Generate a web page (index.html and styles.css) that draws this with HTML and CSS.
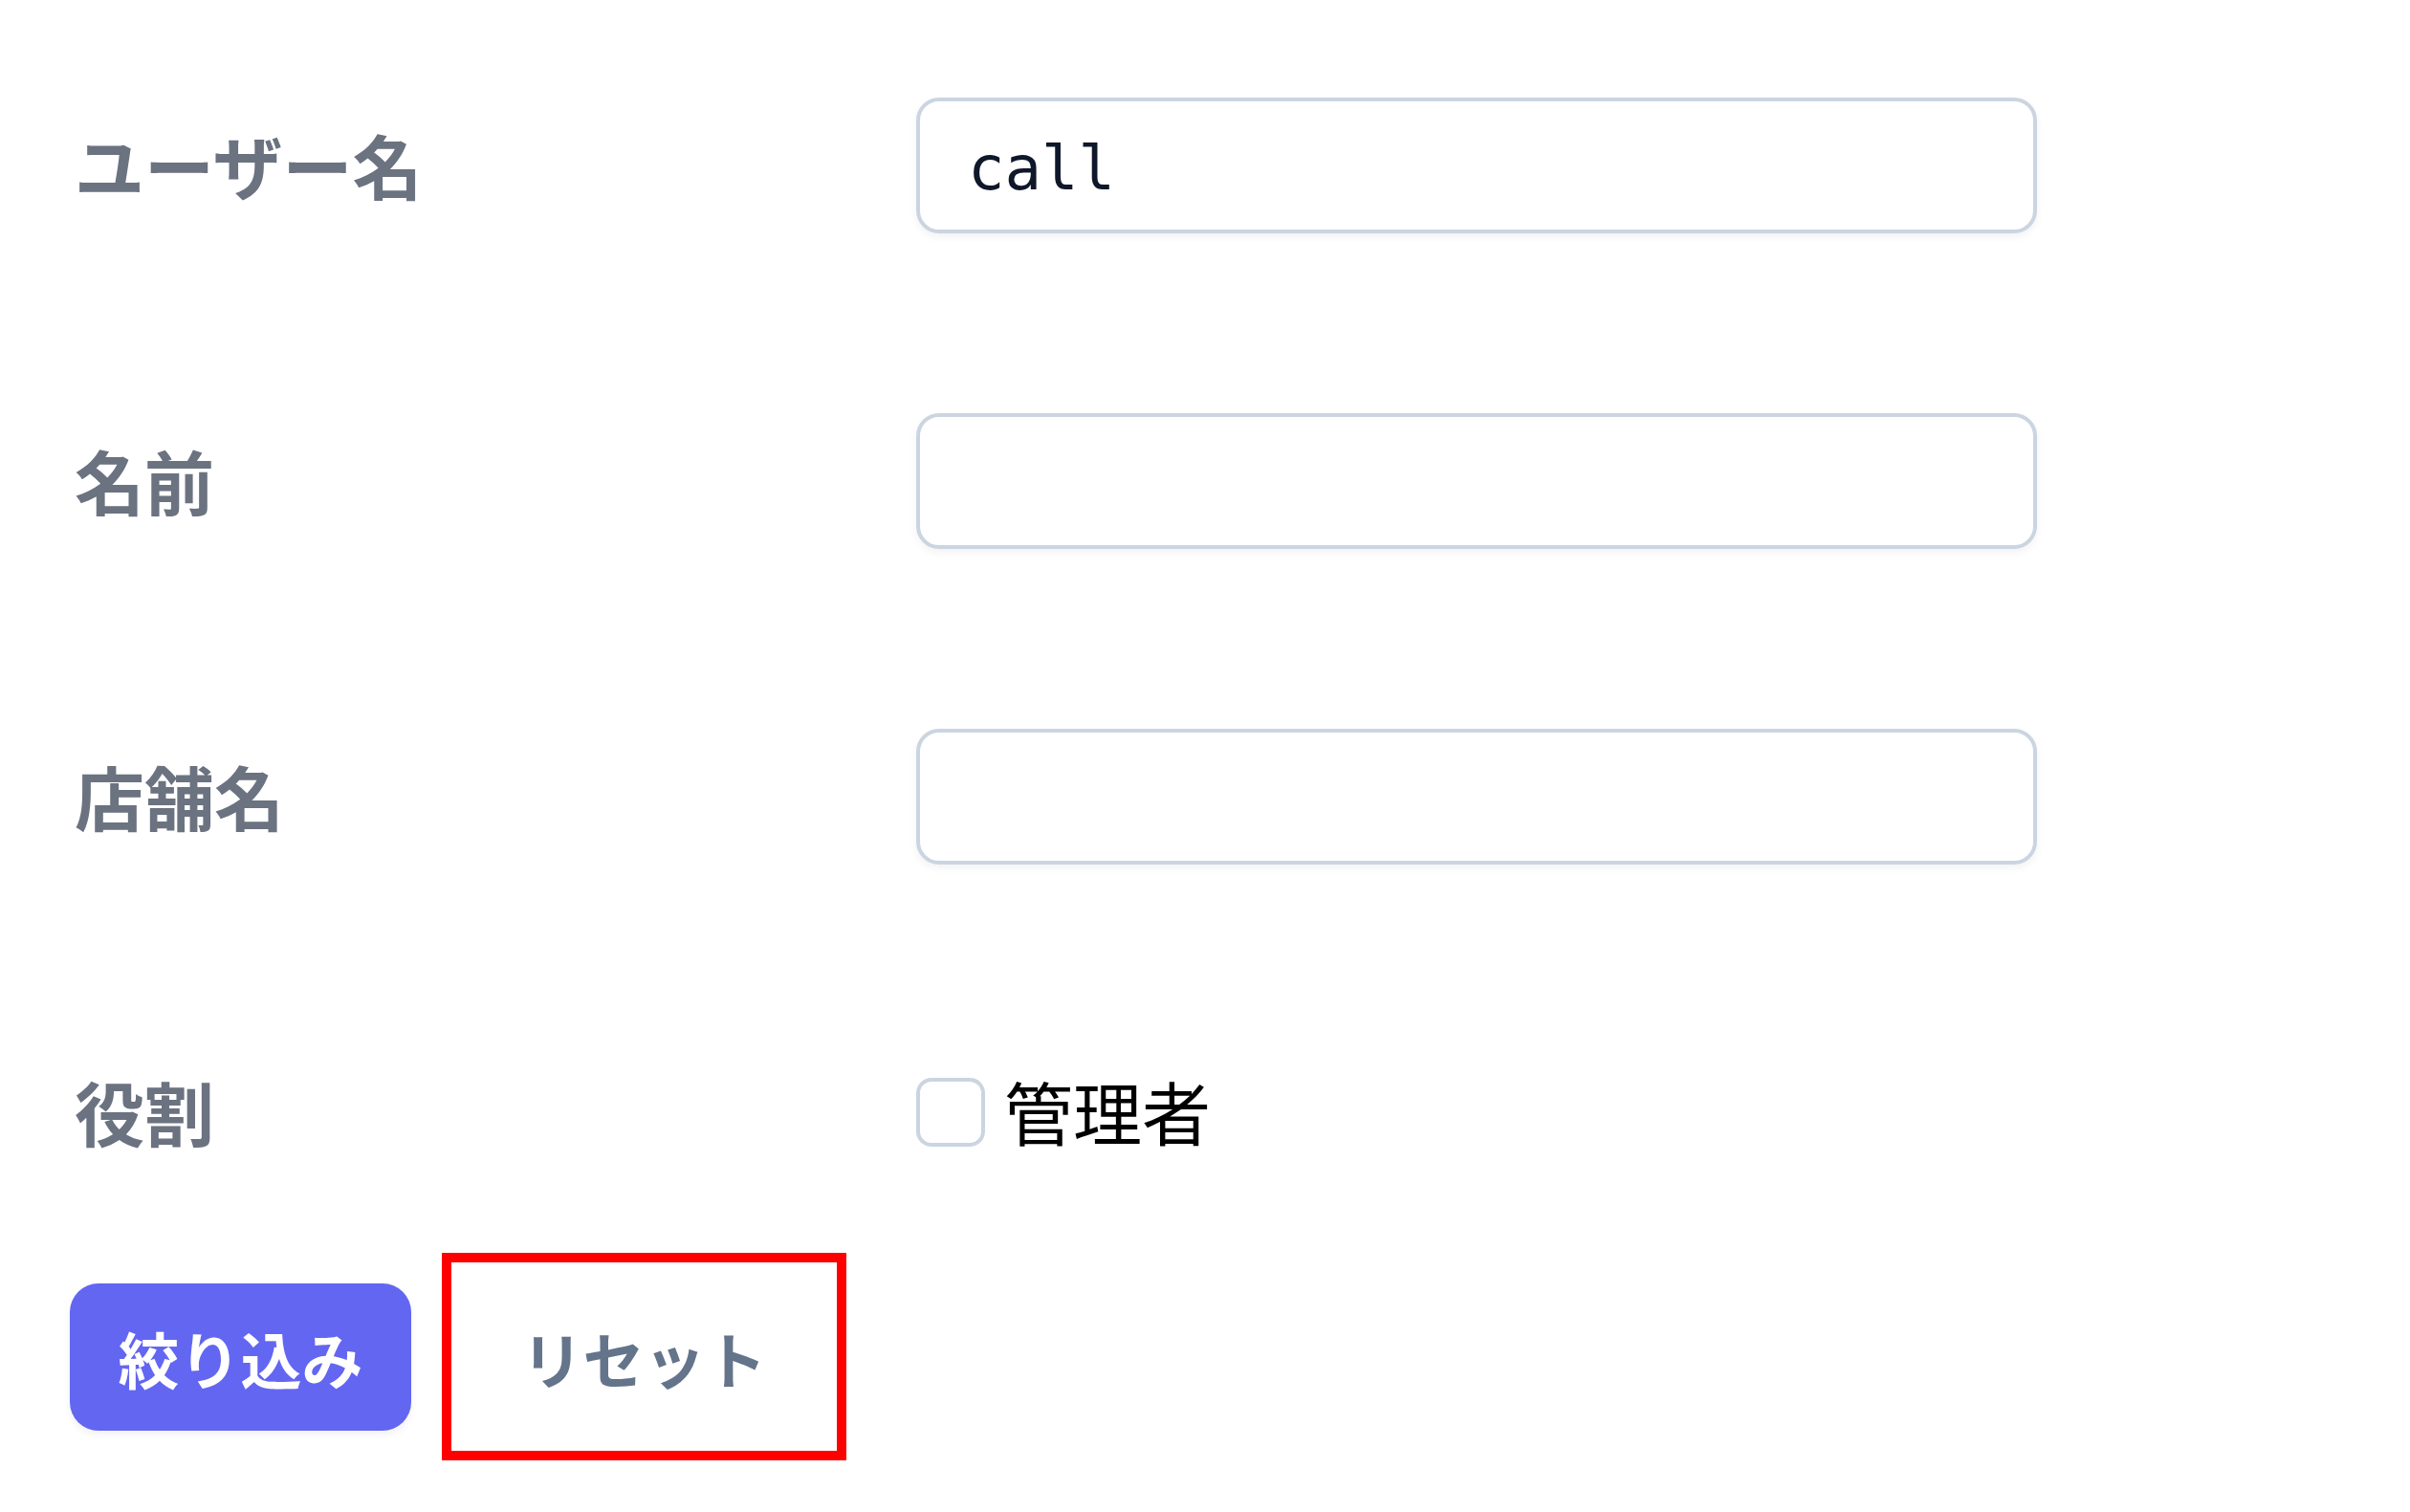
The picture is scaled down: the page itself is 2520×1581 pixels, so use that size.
FILE: index.html
```html
<!DOCTYPE html>
<html lang="ja">
<head>
<meta charset="utf-8">
<title>フィルター</title>
<link rel="stylesheet" href="styles.css">
</head>
<body>
<form class="filter-form">
  <div class="field">
    <label class="field-label" for="username">ユーザー名</label>
    <input class="text-input" id="username" type="text" value="call">
  </div>
  <div class="field">
    <label class="field-label" for="name">名前</label>
    <input class="text-input" id="name" type="text" value="">
  </div>
  <div class="field">
    <label class="field-label" for="store">店舗名</label>
    <input class="text-input" id="store" type="text" value="">
  </div>
  <div class="field field-role">
    <span class="field-label">役割</span>
    <label class="check-option">
      <input class="checkbox" type="checkbox">
      <span class="check-text">管理者</span>
    </label>
  </div>
  <div class="actions">
    <button class="btn-submit" type="button">絞り込み</button>
    <button class="btn-reset" type="button">リセット</button>
  </div>
</form>
</body>
</html>
```

FILE: styles.css
```css
html, body {
  margin: 0;
  padding: 0;
  background: #ffffff;
}

body {
  font-family: "Noto Sans CJK JP", "Noto Sans", sans-serif;
}

.filter-form {
  padding: 102px 0 0 74px;
}

.field {
  display: grid;
  grid-template-columns: 884px 1172px;
  align-items: center;
  height: 142px;
  margin-bottom: 188px;
}

.field-role {
  margin-bottom: 76px;
}

.field-label {
  font-size: 73px;
  font-weight: 700;
  color: #6b7280;
  line-height: 1;
  padding-left: 4px;
  margin-top: -4px;
}

.text-input {
  box-sizing: border-box;
  width: 1172px;
  height: 142px;
  margin: 0;
  padding: 6px 50px 0;
  border: 4px solid #cbd5e1;
  border-radius: 24px;
  background: #ffffff;
  box-shadow: 0 4px 8px rgba(15, 23, 42, 0.05);
  font-family: "DejaVu Sans Mono", "Liberation Mono", monospace;
  font-size: 64px;
  color: #0f172a;
  outline: none;
}

.check-option {
  display: flex;
  align-items: center;
}

.checkbox {
  appearance: none;
  -webkit-appearance: none;
  box-sizing: border-box;
  width: 72px;
  height: 72px;
  margin: 0;
  border: 4px solid #cbd5e1;
  border-radius: 16px;
  background: #ffffff;
}

.check-text {
  margin-left: 20px;
  font-size: 72px;
  font-weight: 400;
  color: #000000;
  line-height: 1;
  margin-top: -4px;
}

.actions {
  display: flex;
  align-items: center;
  gap: 32px;
}

.btn-submit {
  box-sizing: border-box;
  width: 357px;
  height: 154px;
  margin: 0 0 0 -1px;
  border: none;
  border-radius: 30px;
  background: #6366f1;
  color: #ffffff;
  font-family: "Noto Sans CJK JP", sans-serif;
  font-size: 64px;
  font-weight: 700;
  box-shadow: 0 4px 8px rgba(15, 23, 42, 0.06);
  padding: 0;
}

.btn-reset {
  box-sizing: border-box;
  width: 423px;
  height: 217px;
  margin: 0;
  border: 10px solid #ff0000;
  border-radius: 0;
  background: transparent;
  color: #64748b;
  font-family: "Noto Sans CJK JP", sans-serif;
  font-size: 64px;
  font-weight: 700;
  padding: 0;
}
```
